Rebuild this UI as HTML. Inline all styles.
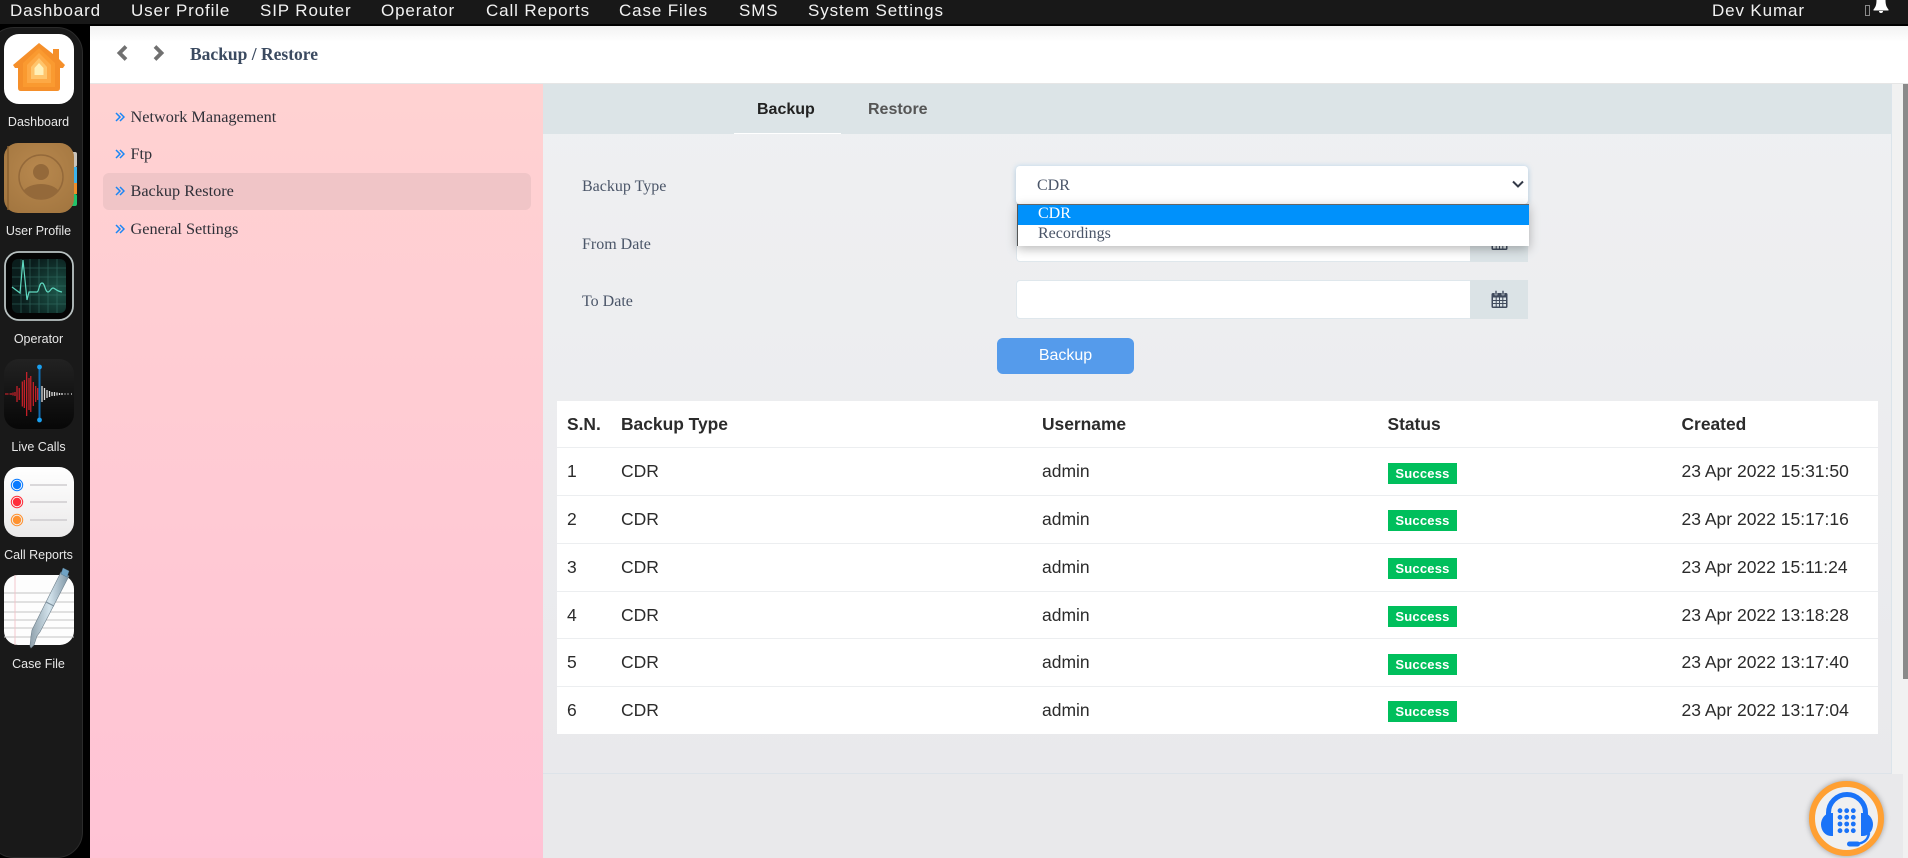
<!DOCTYPE html>
<html><head><meta charset="utf-8"><title>Backup / Restore</title>
<style>
*{box-sizing:border-box}
html,body{margin:0;padding:0;width:1908px;height:858px;overflow:hidden;background:#000;font-family:"Liberation Sans",sans-serif}
.a{position:absolute}
#top{left:0;top:0;width:1908px;height:25px;background:#181818;border-bottom:1px solid #000}
#top span{position:absolute;top:0;line-height:21px;color:#f2f2f2;font-size:17px;letter-spacing:.87px;white-space:nowrap}
#dock{left:-12px;top:27px;width:95px;height:831px;background:#191919;border:1px solid #2b2b2b;border-radius:26px}
.lab{position:absolute;left:0;width:77px;text-align:center;color:#e8e8e8;font-size:12.5px;line-height:14px;white-space:nowrap}
.ico{position:absolute;left:4px;width:70px;height:70px;overflow:visible}
#hdr{left:90px;top:26px;width:1818px;height:58px;background:linear-gradient(#f2f2f2 0,#fff 16px);border-bottom:1px solid #e6e6e6}
#title{left:190px;top:44px;font:bold 17.5px/20px "Liberation Serif",serif;color:#3b4a60;white-space:nowrap}
#pink{left:90px;top:84px;width:453px;height:774px;background:linear-gradient(#ffd2d2,#ffc3d5)}
.m{position:absolute;left:130.500px;font:16.250px/20px "Liberation Serif",serif;color:#2f3038;white-space:nowrap}
.chev{position:absolute;left:115px;width:10px;height:10px}
#act{left:103px;top:173px;width:428px;height:37px;background:#f0c5c7;border-radius:6px}
#main{left:543px;top:84px;width:1349px;height:690px;background:linear-gradient(#eff0f2,#e9e9ec);border-right:1px solid #dbe4ea;border-bottom:1px solid #dde3e9}
#below{left:543px;top:774px;width:1360px;height:84px;background:#e9e9eb}
#track{left:1892px;top:84px;width:16px;height:774px;background:#f1f1f1}
#below2{left:1892px;top:774px;width:11px;height:84px;background:#e9e9eb}
#thumb{left:1903px;top:84px;width:5px;height:595px;background:#8a8a8a}
#tabs{left:543px;top:84px;width:1348px;height:50px;background:#dce4e7}
.tab{position:absolute;top:100px;font:bold 16px/20px "Liberation Sans",sans-serif;white-space:nowrap}
.lbl{position:absolute;left:582px;font:16px/20px "Liberation Serif",serif;color:#4a5568;white-space:nowrap}
.inp{position:absolute;left:1016px;width:454px;background:#fff;border:1px solid #dfe7ec;border-right:0;border-radius:4px 0 0 4px}
.add{position:absolute;left:1470px;width:58px;background:#dbe3e6}
#sel{left:1016px;top:166px;width:512px;height:38px;background:#fff;border-radius:4px;box-shadow:0 0 4px 1px rgba(170,210,240,.5),0 3px 6px rgba(0,0,0,.1)}
#selt{left:1037px;top:176px;font:16px/20px "Liberation Serif",serif;color:#4a5568}
#dd{left:1017px;top:204px;width:512px;height:42px;background:#fff;border-top:1px solid #666;border-left:1px solid #555;box-shadow:0 3px 10px rgba(0,0,0,.28)}
#opt1{left:1018px;top:205px;width:511px;height:20px;background:#0091fb}
.o{position:absolute;left:1038px;font:16px/20px "Liberation Serif",serif;white-space:nowrap}
#btn{left:997px;top:338px;width:137px;height:36px;background:#559beb;border-radius:6px;color:#fff;text-align:center;font-size:16px;line-height:36px}
#tb{left:557px;top:401px;width:1321px;height:333px;background:#fff}
.row{position:absolute;left:0;width:1321px;height:48px;border-top:1px solid #eceef0;color:#2b2b2b;font-size:17.5px;line-height:47px;white-space:nowrap}
.row span{position:absolute;top:0}
.row.h{top:0;height:46px;border-top:0;font-weight:bold;font-size:17.400px;line-height:46px}
.c1{left:10px}.c2{left:64px}.c3{left:485px}.c4{left:830.500px}.c5{left:1124.500px}
.row span.b{left:831px;top:14px;width:69px;height:21px;background:#00bf5c;color:#fff;font-weight:bold;font-size:13px;line-height:21px;text-align:center;letter-spacing:.2px}
.row span.b.t{top:15px}
</style></head><body>

<div class="a" id="hdr"></div>
<svg class="a" style="left:114px;top:44px" width="52" height="18" viewBox="0 0 52 18" fill="none" stroke="#707070" stroke-width="3.8"><path d="M12 2.500L5.500 9l6.500 6.500"/><path d="M41 2.500L47.500 9 41 15.500"/></svg>
<div class="a" id="title">Backup / Restore</div>

<div class="a" id="pink"></div>
<div class="a" id="act"></div>
<svg class="chev" style="top:112px" viewBox="0 0 10 10" fill="none" stroke="#1a86f5" stroke-width="1.500"><path d="M1 1l4 4-4 4M5 1l4 4-4 4"/></svg>
<div class="m" style="top:107px">Network Management</div>
<svg class="chev" style="top:149px" viewBox="0 0 10 10" fill="none" stroke="#1a86f5" stroke-width="1.500"><path d="M1 1l4 4-4 4M5 1l4 4-4 4"/></svg>
<div class="m" style="top:144px">Ftp</div>
<svg class="chev" style="top:186px" viewBox="0 0 10 10" fill="none" stroke="#1a86f5" stroke-width="1.500"><path d="M1 1l4 4-4 4M5 1l4 4-4 4"/></svg>
<div class="m" style="top:181px">Backup Restore</div>
<svg class="chev" style="top:224px" viewBox="0 0 10 10" fill="none" stroke="#1a86f5" stroke-width="1.500"><path d="M1 1l4 4-4 4M5 1l4 4-4 4"/></svg>
<div class="m" style="top:219px">General Settings</div>

<div class="a" id="main"></div>
<div class="a" id="below"></div>
<div class="a" id="track"></div>
<div class="a" id="below2"></div>
<div class="a" id="thumb"></div>
<div class="a" id="tabs"></div>
<div class="a" style="left:734px;top:133px;width:107px;height:1px;background:#fff"></div>
<div class="tab" style="left:757px;color:#222">Backup</div>
<div class="tab" style="left:868px;color:#555">Restore</div>

<div class="lbl" style="top:177px">Backup Type</div>
<div class="lbl" style="top:235px">From Date</div>
<div class="lbl" style="top:292px">To Date</div>

<div class="inp" style="top:222px;height:40px"></div>
<div class="add" style="top:222px;height:40px"></div>
<svg class="a" style="left:1491px;top:232px" width="17" height="18" viewBox="0 0 17 18"><path d="M2 3h13a1.500 1.500 0 0 1 1.500 1.500V16.500A1.500 1.500 0 0 1 15 18H2A1.500 1.500 0 0 1 .5 16.500V4.500A1.500 1.500 0 0 1 2 3z" fill="#3f4a5c"/><path d="M2 7.500h13V16.500H2z" fill="#dbe3e6"/><path d="M2 10.500h13M2 13.500h13M5.200 7.500v9M8.500 7.500v9M11.800 7.500v9" stroke="#3f4a5c" stroke-width="1"/></svg>
<div class="inp" style="top:280px;height:39px"></div>
<div class="add" style="top:280px;height:39px"></div>
<svg class="a" style="left:1491px;top:290px" width="17" height="18" viewBox="0 0 17 18"><path d="M2 3h13a1.500 1.500 0 0 1 1.500 1.500V16.500A1.500 1.500 0 0 1 15 18H2A1.500 1.500 0 0 1 .5 16.500V4.500A1.500 1.500 0 0 1 2 3z" fill="#3f4a5c"/><path d="M4 .5h2v4.500H4zM11 .5h2v4.500h-2z" fill="#3f4a5c" stroke="#dbe3e6" stroke-width=".6"/><path d="M2 7.500h13V16.500H2z" fill="#dbe3e6"/><path d="M2 10.500h13M2 13.500h13M5.200 7.500v9M8.500 7.500v9M11.800 7.500v9" stroke="#3f4a5c" stroke-width="1"/></svg>

<div class="a" id="sel"></div>
<div class="a" id="selt">CDR</div>
<svg class="a" style="left:1512px;top:180px" width="12" height="9" viewBox="0 0 12 9" fill="none" stroke="#343a48" stroke-width="2"><path d="M1 1.500l5 5 5-5"/></svg>
<div class="a" id="dd"></div>
<div class="a" id="opt1"></div>
<div class="o" style="top:204px;color:#fff">CDR</div>
<div class="o" style="top:224px;color:#4a5568">Recordings</div>

<div class="a" id="btn">Backup</div>

<div class="a" id="tb">
<div class="row h"><span class="c1">S.N.</span><span class="c2">Backup Type</span><span class="c3">Username</span><span class="c4">Status</span><span class="c5">Created</span></div>
<div class="row" style="top:46px"><span class="c1">1</span><span class="c2">CDR</span><span class="c3">admin</span><span class="b t">Success</span><span class="c5">23 Apr 2022 15:31:50</span></div>
<div class="row" style="top:94px"><span class="c1">2</span><span class="c2">CDR</span><span class="c3">admin</span><span class="b">Success</span><span class="c5">23 Apr 2022 15:17:16</span></div>
<div class="row" style="top:142px"><span class="c1">3</span><span class="c2">CDR</span><span class="c3">admin</span><span class="b">Success</span><span class="c5">23 Apr 2022 15:11:24</span></div>
<div class="row" style="top:190px"><span class="c1">4</span><span class="c2">CDR</span><span class="c3">admin</span><span class="b">Success</span><span class="c5">23 Apr 2022 13:18:28</span></div>
<div class="row" style="top:237px"><span class="c1">5</span><span class="c2">CDR</span><span class="c3">admin</span><span class="b t">Success</span><span class="c5">23 Apr 2022 13:17:40</span></div>
<div class="row" style="top:285px"><span class="c1">6</span><span class="c2">CDR</span><span class="c3">admin</span><span class="b">Success</span><span class="c5">23 Apr 2022 13:17:04</span></div>
</div>

<!-- headset -->
<div class="a" style="left:1809px;top:781px;width:75px;height:75px;border-radius:50%;background:#f0f0f0;border:6px solid #ffa033;box-shadow:0 0 6px rgba(0,0,0,.35)"></div>
<svg class="a" style="left:1809px;top:781px" width="75" height="75" viewBox="0 0 75 75">
<path d="M19.500 35V32a18.500 18.500 0 0 1 37 0v3" fill="none" stroke="#1a73f8" stroke-width="5"/>
<path d="M24 32v23h-2a10 11.500 0 0 1 0-23z" fill="#1a73f8"/><path d="M52 32v23h2a10 11.500 0 0 0 0-23z" fill="#1a73f8"/>
<path d="M60 52c-1 7-5 10-12 11" fill="none" stroke="#1a73f8" stroke-width="2.500"/><rect x="38" y="60.500" width="13" height="5" rx="2.500" fill="#1a73f8"/>
<g fill="#1a73f8"><circle cx="31" cy="29.700" r="2.400"/><circle cx="37.700" cy="29.700" r="2.400"/><circle cx="44.300" cy="29.700" r="2.400"/><circle cx="31" cy="36.300" r="2.400"/><circle cx="37.700" cy="36.300" r="2.400"/><circle cx="44.300" cy="36.300" r="2.400"/><circle cx="31" cy="43" r="2.400"/><circle cx="37.700" cy="43" r="2.400"/><circle cx="44.300" cy="43" r="2.400"/><circle cx="31" cy="49.700" r="2.400"/><circle cx="37.700" cy="49.700" r="2.400"/><circle cx="44.300" cy="49.700" r="2.400"/></g>
</svg>

<div class="a" id="top">
<span style="left:10px">Dashboard</span><span style="left:131px">User Profile</span><span style="left:260px">SIP Router</span><span style="left:381px">Operator</span><span style="left:486px">Call Reports</span><span style="left:619px">Case Files</span><span style="left:739px">SMS</span><span style="left:808px">System Settings</span><span style="left:1712px">Dev Kumar</span>
<div class="a" style="left:1865px;top:5px;width:5px;height:11px;border:1px solid #8a8a8a"></div>
<svg class="a" style="left:1872px;top:0" width="18" height="14" viewBox="0 0 18 14" fill="#fff"><path d="M4.500 0h9c0 5 1 7 3 9.500v1h-15v-1c2-2.500 3-4.500 3-9.500z"/><path d="M7 11h4a2 2 0 0 1-4 0z"/></svg>
</div>

<div class="a" id="dock"></div>

<!-- home -->
<svg class="ico" style="top:34px" viewBox="0 0 70 70">
<rect width="70" height="70" rx="15" fill="#fff"/>
<path d="M35 9L49 20V15H55V25L61 31 59 34H56V54Q56 57 53 57H17Q14 57 14 54V34H11L9 31z" fill="#f58f2a"/>
<path d="M35 14L51 29V53H19V29z" fill="#fa9a30"/><path d="M35 19L47 31V49H23V31z" fill="#fda945"/><path d="M35 24L43 33V45H27V33z" fill="#ffc56c"/><path d="M35 29L39.500 34V41H30.500V34z" fill="#fff0b8"/>
</svg>
<div class="lab" style="top:115px">Dashboard</div>

<!-- contacts -->
<svg class="ico" style="top:143px" viewBox="0 0 70 70">
<defs><radialGradient id="br" cx=".5" cy=".4" r=".8"><stop offset="0" stop-color="#b8884e"/><stop offset="1" stop-color="#a0743e"/></radialGradient><clipPath id="cc"><circle cx="37" cy="34" r="21.500"/></clipPath></defs>
<rect x="64" y="9" width="9" height="15" fill="#c9c4bc" rx="2"/><rect x="64" y="24" width="9" height="16" fill="#3db3ec"/><rect x="64" y="40" width="9" height="11" fill="#ef8e2b"/><rect x="64" y="51" width="9" height="12" rx="2" fill="#22c36a"/>
<rect x="0" y="0" width="70" height="70" rx="14" fill="url(#br)"/><path d="M4 3v64" stroke="#8a6130" stroke-width="1.500"/>
<circle cx="37" cy="34" r="22" fill="none" stroke="#94693a" stroke-width="1.500"/><circle cx="37" cy="29" r="8" fill="#94693a"/><g clip-path="url(#cc)"><ellipse cx="37" cy="52" rx="19" ry="11" fill="#94693a"/></g>
</svg>
<div class="lab" style="top:224px">User Profile</div>

<!-- activity monitor -->
<svg class="ico" style="top:251px" viewBox="0 0 70 70">
<defs><radialGradient id="sc" cx=".85" cy=".6" r=".7"><stop offset="0" stop-color="#1c5448"/><stop offset="1" stop-color="#0a1d1c"/></radialGradient></defs>
<rect x="1" y="1" width="68" height="68" rx="14" fill="#050505" stroke="#b9c2c2" stroke-width="1.800"/>
<rect x="8" y="8" width="54" height="54" rx="6" fill="url(#sc)"/>
<path d="M17 8v54M26 8v54M35 8v54M44 8v54M53 8v54M8 17h54M8 26h54M8 35h54M8 44h54M8 53h54" stroke="#3d7c72" stroke-width=".8" opacity=".6"/>
<path d="M8 36L16 42 19 9 23 49 25 41H33C35 41 35 32 38 32 41 32 41 41 44 41 46 41 47 37 49 37 51 37 52 40 58 41" fill="none" stroke="#5fd9c0" stroke-width="1.200"/>
</svg>
<div class="lab" style="top:332px">Operator</div>

<!-- voice memos -->
<svg class="ico" style="top:359px" viewBox="0 0 70 70">
<defs><linearGradient id="vm" x1="0" y1="0" x2="0" y2="1"><stop offset="0" stop-color="#222"/><stop offset="1" stop-color="#070707"/></linearGradient></defs>
<rect width="70" height="70" rx="15" fill="url(#vm)"/>
<path d="M1 35h3M5 34.500v1M7 34v2M9 33.500v3M11 33v4M13 27v16M15.200 29v12M18.300 22.500v25M20.300 21v28M22.700 13v44M25 19v32M26.800 17v36M29.300 23v24M31.700 27v16M33.700 29v12" stroke="#e2222c" stroke-width="1.100"/>
<path d="M38 27v16M40.500 29v12M43 31v8M45.500 32v6M48 33v4M50.500 33v4M53 33.500v3M55.500 34v2M58 34v2M61 34.500v1M64 34.500v1M67 35h1" stroke="#ddd" stroke-width="1.300"/>
<path d="M35.500 8v53" stroke="#0f6cb0" stroke-width="2"/><circle cx="35.500" cy="8" r="2.400" fill="#19a0f0"/><circle cx="35.500" cy="61" r="2.400" fill="#19a0f0"/>
</svg>
<div class="lab" style="top:440px">Live Calls</div>

<!-- reminders -->
<svg class="ico" style="top:467px" viewBox="0 0 70 70">
<defs><linearGradient id="rm" x1="0" y1="0" x2="0" y2="1"><stop offset="0" stop-color="#fff"/><stop offset="1" stop-color="#ebeaea"/></linearGradient></defs>
<rect width="70" height="70" rx="15" fill="url(#rm)"/>
<circle cx="13" cy="18" r="4.200" fill="#0a7bff"/><circle cx="13" cy="18" r="5.700" fill="none" stroke="#0a7bff"/><circle cx="13" cy="35" r="4.200" fill="#ff2d3a"/><circle cx="13" cy="35" r="5.700" fill="none" stroke="#ff2d3a"/><circle cx="13" cy="53" r="4.200" fill="#ff9230"/><circle cx="13" cy="53" r="5.700" fill="none" stroke="#ff9230"/>
<path d="M26 18h37M26 35h37M26 53h37" stroke="#c6c4c8" stroke-width="1.300"/>
</svg>
<div class="lab" style="top:548px">Call Reports</div>

<!-- textedit -->
<svg class="ico" style="top:575px" viewBox="0 0 70 70">
<defs><linearGradient id="pn" x1="0" y1="0" x2="1" y2="0"><stop offset="0" stop-color="#8fa0ab"/><stop offset=".5" stop-color="#d3e3ec"/><stop offset="1" stop-color="#7c93a3"/></linearGradient></defs>
<rect width="70" height="70" rx="14" fill="#fdfdfd"/>
<path d="M0 18h70M0 27h70M0 37h70M0 45h70M0 53h70M0 62h70" stroke="#c4c4c4" stroke-width=".9"/><path d="M11 0v70" stroke="#f2c2c8" stroke-width=".9"/>
<path d="M57 -3l8 4L36 57l-3 4-3 9-3 3-1-2 1-10 1-6z" fill="url(#pn)" stroke="#6f808c" stroke-width=".6"/>
<path d="M59 -7l6 3-2 6-6-3z" fill="#6fa2c4" stroke="#54788f" stroke-width=".5"/>
<path d="M42 27l8 4" stroke="#7b8e9b" stroke-width="1"/>
</svg>
<div class="lab" style="top:657px">Case File</div>

</body></html>
